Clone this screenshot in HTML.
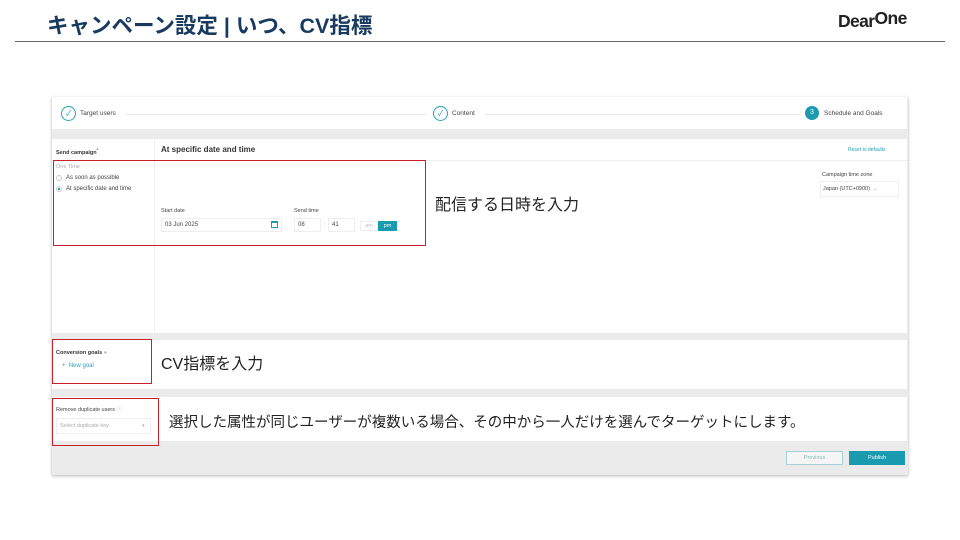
<!DOCTYPE html>
<html><head><meta charset="utf-8"><style>
*{margin:0;padding:0;box-sizing:border-box}
body{width:960px;height:540px;background:#fff;position:relative;overflow:hidden;font-family:"Liberation Sans","Noto Sans CJK JP",sans-serif}
.a{position:absolute}
.t{font-size:6px;color:#444;white-space:nowrap}
.red{position:absolute;border:1.3px solid #c8202a}
.jp{font-size:16px;color:#222;white-space:nowrap;font-family:"Liberation Sans","Noto Sans CJK JP",sans-serif}
</style></head><body>
<div class="a" style="left:47px;top:9px;font-size:21.5px;font-weight:bold;color:#173a5e;white-space:nowrap">キャンペーン設定 | いつ、CV指標</div>
<div class="a" style="left:838px;top:11px;font-size:17.5px;font-weight:bold;color:#222;letter-spacing:-0.6px">Dear<span style="position:relative;top:-3px">One</span></div>
<div class="a" style="left:15px;top:41px;width:930px;height:1px;background:#666"></div>

<div class="a" style="left:52px;top:97px;width:856px;height:378px;background:#ebebeb;box-shadow:0 1px 3px rgba(0,0,0,.3)"></div>
<div class="a" style="left:52px;top:97px;width:855px;height:32px;background:#fff"></div>
<div class="a" style="left:126px;top:114px;width:300px;height:1px;background:#e8e8e8"></div>
<div class="a" style="left:485px;top:114px;width:316px;height:1px;background:#e8e8e8"></div>
<div class="a" style="left:61px;top:106px;width:15px;height:15px;border:1px solid #2aa3b8;border-radius:50%;color:#2aa3b8;font-size:8px;text-align:center;line-height:13px">✓</div>
<div class="a t" style="left:80px;top:110px;font-size:6.5px">Target users</div>
<div class="a" style="left:433px;top:106px;width:15px;height:15px;border:1px solid #2aa3b8;border-radius:50%;color:#2aa3b8;font-size:8px;text-align:center;line-height:13px">✓</div>
<div class="a t" style="left:452px;top:110px;font-size:6.5px">Content</div>
<div class="a" style="left:805px;top:106px;width:14px;height:14px;background:#1b9bb0;border-radius:50%;color:#fff;font-size:7px;text-align:center;line-height:14px">3</div>
<div class="a t" style="left:824px;top:110px;font-size:6.5px">Schedule and Goals</div>

<div class="a" style="left:52px;top:139px;width:855px;height:194px;background:#fff"></div>
<div class="a" style="left:154px;top:139px;width:1px;height:194px;background:#eee"></div>
<div class="a" style="left:52px;top:160px;width:855px;height:1px;background:#eee"></div>
<div class="a t" style="left:56px;top:147px;font-weight:bold;font-size:5.5px;color:#333">Send campaign<sup style="font-size:4px">*</sup></div>
<div class="a t" style="left:161px;top:145px;font-weight:bold;font-size:8px;color:#333">At specific date and time</div>
<div class="a t" style="left:848px;top:147px;font-size:5px;color:#2aa3b8">Reset to defaults</div>
<div class="a t" style="left:56px;top:164px;color:#aaa;font-size:5.5px">One Time</div>
<div class="a" style="left:56px;top:175px;width:6px;height:6px;border:1px solid #ccc;border-radius:50%"></div>
<div class="a t" style="left:66px;top:175px">As soon as possible</div>
<div class="a" style="left:56px;top:186px;width:6px;height:6px;border:1px solid #ccc;border-radius:50%;background:radial-gradient(#1b9bb0 40%,#fff 45%)"></div>
<div class="a t" style="left:66px;top:186px">At specific date and time</div>
<div class="a t" style="left:161px;top:208px;font-size:5.5px">Start date</div>
<div class="a" style="left:161px;top:218px;width:121px;height:14px;border:1px solid #eee"></div>
<div class="a t" style="left:165px;top:222px">03 Jun 2025</div>
<div class="a" style="left:271px;top:221px;width:7px;height:7px;border:1.2px solid #1b9bb0;border-top-width:2px"></div>
<div class="a t" style="left:294px;top:208px;font-size:5.5px">Send time</div>
<div class="a" style="left:294px;top:218px;width:27px;height:14px;border:1px solid #eee"></div>
<div class="a t" style="left:298px;top:222px">08</div>
<div class="a t" style="left:324px;top:222px;color:#aaa">:</div>
<div class="a" style="left:328px;top:218px;width:27px;height:14px;border:1px solid #eee"></div>
<div class="a t" style="left:332px;top:222px">41</div>
<div class="a" style="left:360px;top:221px;width:18px;height:10px;border:1px solid #eee;color:#bbb;font-size:5.5px;text-align:center;line-height:8px">am</div>
<div class="a" style="left:378px;top:221px;width:19px;height:10px;background:#1b9bb0;color:#fff;font-size:5.5px;text-align:center;line-height:10px">pm</div>
<div class="a t" style="left:822px;top:172px;font-size:5.5px">Campaign time zone</div>
<div class="a" style="left:820px;top:181px;width:79px;height:16px;border:1px solid #eee"></div>
<div class="a t" style="left:823px;top:186px;font-size:5.5px">Japan (UTC+0900) &nbsp;<span style="color:#aaa">⌄</span></div>
<div class="jp a" style="left:435px;top:191px">配信する日時を入力</div>

<div class="a" style="left:52px;top:340px;width:855px;height:49px;background:#fff"></div>
<div class="a t" style="left:56px;top:350px;font-weight:bold;font-size:5.5px;color:#333">Conversion goals <span style="color:#9bb">●</span></div>
<div class="a t" style="left:62px;top:363px;color:#2aa3b8;font-size:6px">+ &nbsp;New goal</div>
<div class="jp a" style="left:161px;top:350px">CV指標を入力</div>

<div class="a" style="left:52px;top:397px;width:855px;height:44px;background:#fff"></div>
<div class="a t" style="left:56px;top:405px;font-size:5.5px">Remove duplicate users <span style="color:#9bb">ⓘ</span></div>
<div class="a" style="left:56px;top:418px;width:95px;height:16px;border:1px solid #eee"></div>
<div class="a t" style="left:60px;top:423px;color:#aaa;font-size:5.5px">Select duplicate key</div>
<div class="a t" style="left:142px;top:423px;color:#aaa;font-size:5px">▾</div>
<div class="jp a" style="left:169px;top:411px;font-size:14.5px">選択した属性が同じユーザーが複数いる場合、その中から一人だけを選んでターゲットにします。</div>

<div class="a" style="left:786px;top:451px;width:57px;height:14px;border:1px solid #a8d0d8;background:#f5f5f5;color:#8bb;font-size:5.5px;text-align:center;line-height:12px">Previous</div>
<div class="a" style="left:849px;top:451px;width:56px;height:14px;background:#1b9bb0;color:#fff;font-size:5.5px;text-align:center;line-height:14px">Publish</div>

<div class="red" style="left:53px;top:160px;width:373px;height:86px"></div>
<div class="red" style="left:52px;top:339px;width:100px;height:45px"></div>
<div class="red" style="left:52px;top:398px;width:107px;height:48px"></div>
</body></html>
